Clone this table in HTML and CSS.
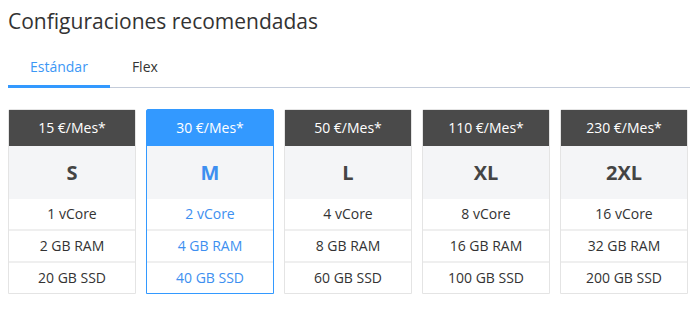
FILE: index.html
```html
<!DOCTYPE html>
<html lang="es">
<head>
<meta charset="utf-8">
<title>Configuraciones recomendadas</title>
<link rel="stylesheet" href="styles.css">
</head>
<body>
<div class="page">
  <h1 class="title">Configuraciones recomendadas</h1>
  <nav class="tabs">
    <span class="tab tab-active">Estándar</span>
    <span class="tab">Flex</span>
  </nav>
  <div class="plans">
    <div class="plan">
      <div class="plan-price">15 €/Mes*</div>
      <div class="plan-size">S</div>
      <div class="plan-row">1 vCore</div>
      <div class="plan-row">2 GB RAM</div>
      <div class="plan-row">20 GB SSD</div>
    </div>
    <div class="plan plan-active">
      <div class="plan-price">30 €/Mes*</div>
      <div class="plan-size">M</div>
      <div class="plan-row">2 vCore</div>
      <div class="plan-row">4 GB RAM</div>
      <div class="plan-row">40 GB SSD</div>
    </div>
    <div class="plan">
      <div class="plan-price">50 €/Mes*</div>
      <div class="plan-size">L</div>
      <div class="plan-row">4 vCore</div>
      <div class="plan-row">8 GB RAM</div>
      <div class="plan-row">60 GB SSD</div>
    </div>
    <div class="plan">
      <div class="plan-price">110 €/Mes*</div>
      <div class="plan-size">XL</div>
      <div class="plan-row">8 vCore</div>
      <div class="plan-row">16 GB RAM</div>
      <div class="plan-row">100 GB SSD</div>
    </div>
    <div class="plan">
      <div class="plan-price">230 €/Mes*</div>
      <div class="plan-size">2XL</div>
      <div class="plan-row">16 vCore</div>
      <div class="plan-row">32 GB RAM</div>
      <div class="plan-row">200 GB SSD</div>
    </div>
  </div>
</div>
</body>
</html>
```
FILE: styles.css
```css
* { box-sizing: border-box; }
html, body { margin: 0; padding: 0; background: #fff; }
body {
  font-family: "Open Sans", "Liberation Sans", sans-serif;
  color: #333;
}
.page {
  width: 698px;
  padding: 0 8px;
}
.title {
  margin: 7px 0 0 0;
  font-size: 21px;
  line-height: 28px;
  font-weight: 400;
  color: #333;
}
.tabs {
  display: flex;
  width: 682px;
  margin-top: 12px;
  border-bottom: 1px solid #c4ccda;
}
.tab {
  display: block;
  padding: 10px 22px 8px;
  font-size: 14px;
  line-height: 20px;
  color: #333;
  border-bottom: 3px solid transparent;
  margin-bottom: -1px;
}
.tab-active {
  color: #3c97f5;
  border-bottom-color: #3399ff;
}
.plans {
  display: grid;
  grid-template-columns: repeat(5, 128px);
  column-gap: 10px;
  margin-top: 21px;
}
.plan {
  border: 1px solid #e4e4e4;
  border-radius: 2px 2px 0 0;
  text-align: center;
  background: #fff;
}
.plan-price {
  height: 36px;
  line-height: 36px;
  background: #4a4a4a;
  color: #fff;
  font-size: 14px;
}
.plan-size {
  height: 53px;
  line-height: 53px;
  background: #f4f5f7;
  font-size: 20px;
  font-weight: 700;
  color: #444;
}
.plan-row {
  height: 30px;
  line-height: 30px;
  font-size: 14px;
  color: #333;
}
.plan-row + .plan-row {
  border-top: 2px solid #efefef;
  height: 32px;
}
.plan-active {
  border-color: #3399ff;
}
.plan-active .plan-price {
  background: #3399ff;
}
.plan-active .plan-size,
.plan-active .plan-row {
  color: #3d8ff0;
}
```
